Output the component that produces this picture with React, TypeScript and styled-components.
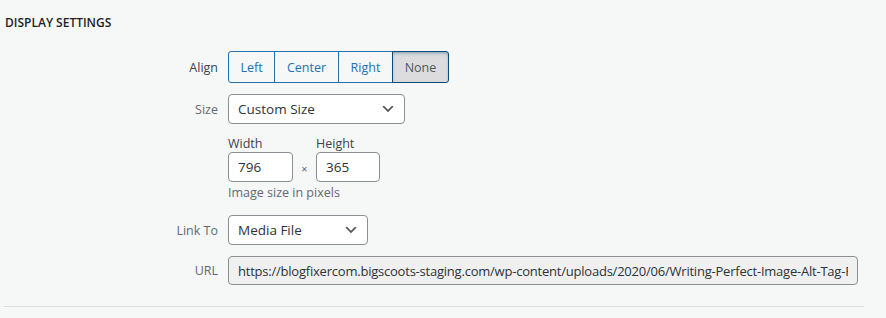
import React from "react";
import styled, { createGlobalStyle, css } from "styled-components";

const Global = createGlobalStyle`
  html, body { margin: 0; padding: 0; background: #f6f7f7; }
  body { font-family: "Open Sans", "Noto Sans", sans-serif; color: #1d2327; }
  * { box-sizing: border-box; }
`;

const Panel = styled.section`
  width: 860px;
  margin-left: 4px;
  padding-top: 15px;
  border-bottom: 1px solid #dcdcde;
  height: 307px;
`;

const Heading = styled.h2`
  margin: 0 0 20px 1px;
  font-size: 12px;
  line-height: 16px;
  font-weight: 600;
  text-transform: uppercase;
  color: #1d2327;
`;

const Rows = styled.div`
  display: flex;
  flex-direction: column;
`;

const Row = styled.div<{ $gap: number; $align?: string }>`
  display: flex;
  align-items: ${(p) => p.$align || "center"};
  margin-bottom: ${(p) => p.$gap}px;
`;

const Label = styled.span<{ $dark?: boolean }>`
  width: 224px;
  flex: none;
  padding-right: 10px;
  text-align: right;
  font-size: 12.5px;
  color: ${(p) => (p.$dark ? "#3c434a" : "#646970")};
`;

const Group = styled.div`
  display: flex;
`;

const SegButton = styled.button<{ $pressed?: boolean; $w: number; $pos: "first" | "mid" | "last" }>`
  width: ${(p) => p.$w}px;
  height: 32px;
  padding: 0;
  font-family: inherit;
  font-size: 12.5px;
  background: #f6f7f7;
  color: #2271b1;
  border: 1px solid #2271b1;
  margin-left: -1px;
  ${(p) =>
    p.$pos === "first" &&
    css`
      margin-left: 0;
      border-radius: 3px 0 0 3px;
    `}
  ${(p) =>
    p.$pos === "last" &&
    css`
      border-radius: 0 3px 3px 0;
    `}
  ${(p) =>
    p.$pressed &&
    css`
      background: #dcdcde;
      color: #50575e;
      border-color: #0a4b78;
      box-shadow: inset 0 2px 5px -3px #0a4b78;
      position: relative;
    `}
`;

const SelectBox = styled.div<{ $w: number }>`
  width: ${(p) => p.$w}px;
  height: 30px;
  display: flex;
  align-items: center;
  justify-content: space-between;
  padding: 0 8px 0 9px;
  background: #fff;
  border: 1px solid #8c8f94;
  border-radius: 4px;
  font-size: 13.5px;
  color: #2c3338;
`;

const Chevron = () => (
  <svg width="16" height="16" viewBox="0 0 20 20" aria-hidden="true">
    <path d="M5 6l5 5 5-5 2 1-7 7-7-7 2-1z" fill="#555" />
  </svg>
);

const Dims = styled.div`
  display: flex;
  flex-direction: column;
`;

const DimRow = styled.div`
  display: flex;
  align-items: flex-end;
`;

const DimField = styled.label`
  display: flex;
  flex-direction: column;
  font-size: 12.5px;
  line-height: 17px;
  color: #3c434a;
`;

const Times = styled.span`
  width: 23px;
  text-align: center;
  font-size: 11px;
  color: #646970;
  padding-bottom: 6px;
`;

const TextInput = styled.input<{ $w: number; $ro?: boolean }>`
  width: ${(p) => p.$w}px;
  height: ${(p) => (p.$ro ? 29 : 30)}px;
  padding: 0 9px;
  margin: 0;
  font-family: inherit;
  font-size: ${(p) => (p.$ro ? 13 : 13.5)}px;
  letter-spacing: ${(p) => (p.$ro ? "-0.22px" : "normal")};
  color: #2c3338;
  background: ${(p) => (p.$ro ? "#f0f0f1" : "#fff")};
  border: 1px solid #8c8f94;
  border-radius: 4px;
  outline: none;
`;

const Help = styled.span`
  font-size: 12.5px;
  line-height: 18px;
  color: #646970;
  margin-top: 2px;
`;

export default function App() {
  const url =
    "https://blogfixercom.bigscoots-staging.com/wp-content/uploads/2020/06/Writing-Perfect-Image-Alt-Tag-For-SEO.png";
  return (
    <>
      <Global />
      <Panel>
        <Heading>Display Settings</Heading>
        <Rows>
          <Row $gap={11}>
            <Label $dark>Align</Label>
            <Group>
              <SegButton $w={47} $pos="first">Left</SegButton>
              <SegButton $w={65} $pos="mid">Center</SegButton>
              <SegButton $w={55} $pos="mid">Right</SegButton>
              <SegButton $w={57} $pos="last" $pressed>None</SegButton>
            </Group>
          </Row>
          <Row $gap={11}>
            <Label>Size</Label>
            <SelectBox $w={177}>
              <span>Custom Size</span>
              <Chevron />
            </SelectBox>
          </Row>
          <Row $gap={13} $align="flex-start">
            <Label />
            <Dims>
              <DimRow>
                <DimField>
                  Width
                  <TextInput $w={65} defaultValue="796" />
                </DimField>
                <Times>×</Times>
                <DimField>
                  Height
                  <TextInput $w={64} defaultValue="365" />
                </DimField>
              </DimRow>
              <Help>Image size in pixels</Help>
            </Dims>
          </Row>
          <Row $gap={11}>
            <Label>Link To</Label>
            <SelectBox $w={140}>
              <span>Media File</span>
              <Chevron />
            </SelectBox>
          </Row>
          <Row $gap={0}>
            <Label>URL</Label>
            <TextInput $w={630} $ro readOnly defaultValue={url} />
          </Row>
        </Rows>
      </Panel>
    </>
  );
}
